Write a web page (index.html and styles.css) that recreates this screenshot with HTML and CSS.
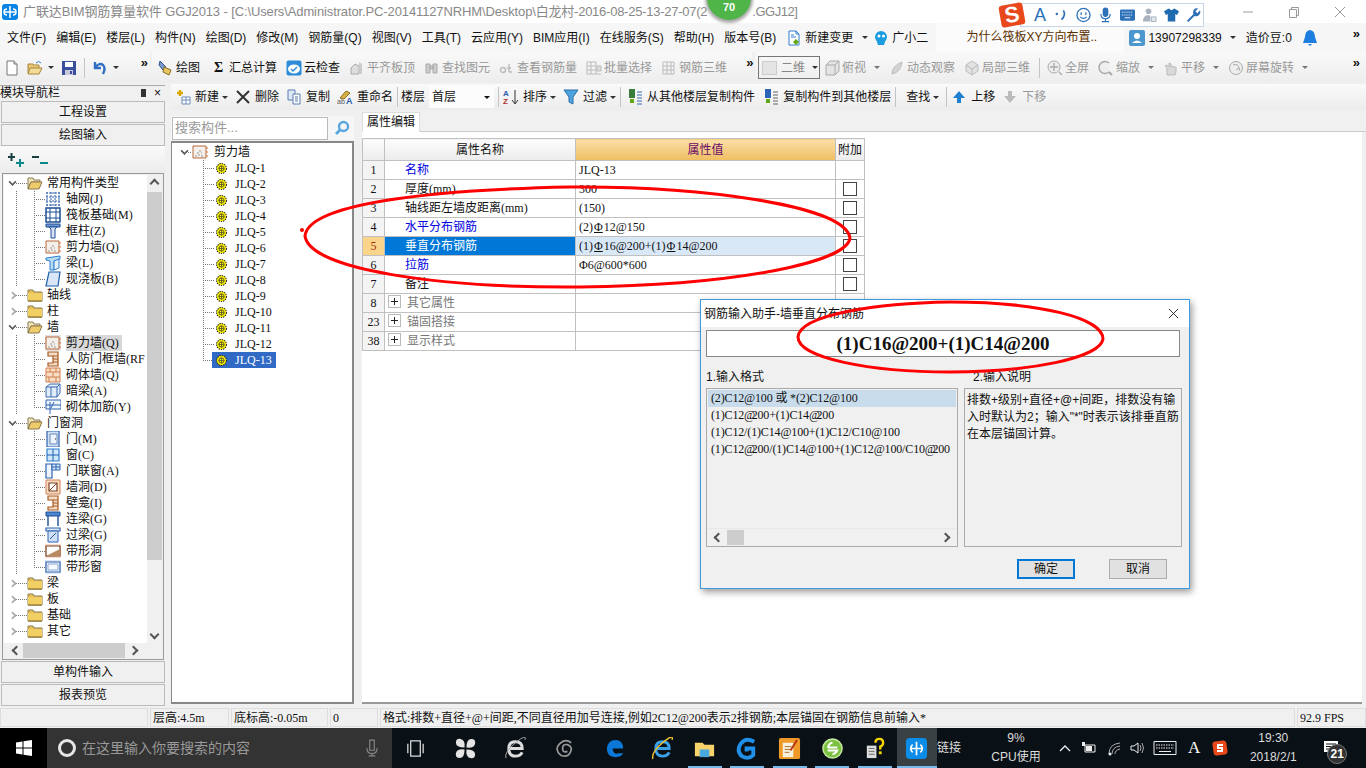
FILE: index.html
```html
<!DOCTYPE html>
<html lang="zh-CN">
<head>
    <meta charset="UTF-8">
    <title>广联达BIM钢筋算量软件 GGJ2013</title>
    <link rel="stylesheet" href="styles.css">
</head>
<body>
    <!-- 图标 -->
    <svg class="defs" width="0" height="0">
        <symbol id="i-new" viewBox="0 0 16 16"><path d="M3 1h7l3 3v11H3z" fill="#fff" stroke="#777"/><path d="M10 1v3h3" fill="#ddd" stroke="#777"/></symbol>
        <symbol id="i-open" viewBox="0 0 16 16"><path d="M1 4h5l1 1h5v8H1z" fill="#e8c878" stroke="#a8853a"/><path d="M3 8h12l-3 6H1z" fill="#f3dc98" stroke="#a8853a"/><path d="M9 3q3-3 5 0" fill="none" stroke="#3a7bc8"/></symbol>
        <symbol id="i-save" viewBox="0 0 16 16"><path d="M1 1h14v14H1z" fill="#3b4fa0"/><path d="M4 2h8v5H4z" fill="#fff"/><path d="M4 10h8v5H4z" fill="#c8c8d8"/><path d="M9 11h2v3H9z" fill="#3b4fa0"/></symbol>
        <symbol id="i-undo" viewBox="0 0 16 16"><path d="M3 2v6h6M3 8q4-6 8-3 3 3 0 9" fill="none" stroke="#2f6fc4" stroke-width="2.4"/></symbol>
        <symbol id="i-draw" viewBox="0 0 16 16"><path d="M2 1l6 6-3 3-4-5z" fill="#7b98c8" stroke="#34558f"/><path d="M6 7l7 3-2 5-6-3z" fill="#e5c560" stroke="#8a6f20"/></symbol>
        <symbol id="i-cloud" viewBox="0 0 16 16"><rect x=".5" y=".5" width="15" height="15" rx="2" fill="#2e8bd8"/><ellipse cx="8" cy="9" rx="6" ry="4.5" fill="#fff"/><path d="M5 9l2 2 4-4" fill="none" stroke="#2e8bd8" stroke-width="1.5"/></symbol>
        <symbol id="i-gplate" viewBox="0 0 16 16"><path d="M2 14V8l4-4 4 2v8z" fill="#ddd" stroke="#aaa"/><path d="M10 2l3 2v10h-3z" fill="#ccc"/></symbol>
        <symbol id="i-gfind" viewBox="0 0 16 16"><path d="M2 4h4v9H2zM9 4h4v9H9zM6 6h3v3H6z" fill="#ccc" stroke="#aaa"/></symbol>
        <symbol id="i-grebar" viewBox="0 0 16 16"><circle cx="4" cy="10" r="2.5" fill="none" stroke="#bbb" stroke-width="1.4"/><path d="M10 4v8M10 12h3M8 8h4" fill="none" stroke="#bbb" stroke-width="1.4"/></symbol>
        <symbol id="i-gbatch" viewBox="0 0 16 16"><path d="M1 2h9M1 6h9M1 10h9M1 14h14M1 2v12M5 2v12M10 2v12" stroke="#bbb" fill="none"/><path d="M11 6h4v5h-4z" fill="#ddd" stroke="#bbb"/></symbol>
        <symbol id="i-g3d" viewBox="0 0 16 16"><path d="M2 2h11v12H2zM2 6h11M2 10h11M6 2v12M10 2v12" fill="none" stroke="#bbb"/></symbol>
        <symbol id="i-gbox" viewBox="0 0 16 16"><path d="M2 5l4-4h9v10l-4 4H2z" fill="#e4e4e4" stroke="#aaa"/><path d="M2 5h9v10M11 5l4-4" fill="none" stroke="#aaa"/></symbol>
        <symbol id="i-gorbit" viewBox="0 0 16 16"><path d="M3 14Q3 6 13 2 12 12 3 14z" fill="#d4d4d4" stroke="#bbb"/></symbol>
        <symbol id="i-glocal" viewBox="0 0 16 16"><path d="M8 1l6 4v6l-6 4-6-4V5z" fill="#e2e2e2" stroke="#bbb"/><path d="M2 5l6 4 6-4M8 9v6" fill="none" stroke="#bbb"/></symbol>
        <symbol id="i-gfull" viewBox="0 0 16 16"><circle cx="7" cy="7" r="6" fill="#eee" stroke="#aaa"/><path d="M7 3v8M3 7h8M12 12l3 3" stroke="#aaa" fill="none" stroke-width="1.3"/></symbol>
        <symbol id="i-gzoom" viewBox="0 0 16 16"><path d="M11 3a6 6 0 1 0 0 9" fill="#eee" stroke="#aaa" stroke-width="1.5"/><path d="M11 12l3 3" stroke="#aaa" stroke-width="2"/></symbol>
        <symbol id="i-gpan" viewBox="0 0 16 16"><path d="M4 15V8l-2-2 2-1 2 2V3l2 1v3l2-1 1 1 2 0v5l-1 3z" fill="#d8d8d8" stroke="#bbb"/></symbol>
        <symbol id="i-grot" viewBox="0 0 16 16"><circle cx="8" cy="8" r="6.5" fill="#eee" stroke="#aaa"/><path d="M5 5q5-2 6 3M8 10l3-2 1 3" fill="none" stroke="#aaa"/></symbol>
        <symbol id="i-nfile" viewBox="0 0 16 16"><path d="M3 1h7l3 3v11H3z" fill="#fff" stroke="#2f7fcf"/><path d="M10 1v3h3M5 5h3M5 7h5" fill="none" stroke="#2f7fcf"/><path d="M10 9l3 3-3 3-3-3z" fill="#63a814"/></symbol>
        <symbol id="i-bot" viewBox="0 0 16 16"><circle cx="8" cy="7" r="6" fill="#1b9be0"/><circle cx="6" cy="6" r="1.5" fill="#fff"/><circle cx="10.500" cy="6" r="1.5" fill="#fff"/><path d="M4 12l1 3h6l1-3" fill="#1b9be0"/></symbol>
        <symbol id="i-user" viewBox="0 0 16 16"><rect width="16" height="16" rx="2" fill="#4d97cf"/><circle cx="8" cy="6" r="3" fill="#fff"/><path d="M3 13q5-5 10 0z" fill="#fff"/></symbol>
        <symbol id="i-bell" viewBox="0 0 16 16"><path d="M8 0q5 1 5 7l2 6H1l2-6q0-6 5-7z" fill="#1d7ee0"/><path d="M6 14h4l-2 2z" fill="#1d7ee0"/></symbol>
        <symbol id="i-add" viewBox="0 0 16 16"><path d="M2 4h6M5 1v6" stroke="#d8a800" stroke-width="2.4"/><path d="M7 8h8v7H7z" fill="#fff" stroke="#6d8bb8"/><path d="M7 11h8M11 8v7" stroke="#6d8bb8"/></symbol>
        <symbol id="i-copy" viewBox="0 0 16 16"><path d="M2 1h7v10H2z" fill="#dfe8f6" stroke="#5a7eb0"/><path d="M7 5h7v10H7z" fill="#fff" stroke="#5a7eb0"/><path d="M9 8h3M9 10h3M9 12h3" stroke="#5a7eb0"/></symbol>
        <symbol id="i-filter" viewBox="0 0 16 16"><path d="M1 1h14l-5 7v7l-4-2V8z" fill="#4da3e0" stroke="#2c6fa8"/></symbol>
        <symbol id="i-cfrom" viewBox="0 0 16 16"><path d="M2 0h6v9H2z" fill="#3a7d3a"/><path d="M3 10h4v4H3z" fill="#63a814"/><path d="M10 3h5M10 6h5M10 9h5M10 12h5M10 15h5" stroke="#3b6bb0"/></symbol>
        <symbol id="i-cto" viewBox="0 0 16 16"><path d="M2 0h6v9H2z" fill="#2f63b8"/><path d="M3 10h4v4H3z" fill="#63a814"/><path d="M10 3h5M10 6h5M10 9h5M10 12h5M10 15h5" stroke="#666"/></symbol>
        <symbol id="i-up" viewBox="0 0 16 16"><path d="M8 2l6 7h-4v5H6V9H2z" fill="#1f7fd0"/></symbol>
        <symbol id="i-down" viewBox="0 0 16 16"><path d="M8 14l6-7h-4V2H6v5H2z" fill="#bbb"/></symbol>
        <symbol id="i-search" viewBox="0 0 16 16"><circle cx="9.500" cy="6.500" r="4.500" fill="none" stroke="#5aa7e0" stroke-width="2.400"/><path d="M6 10l-4 4" stroke="#5aa7e0" stroke-width="2.800"/></symbol>
        <symbol id="i-fclosed" viewBox="0 0 16 16"><path d="M1 3h5l1 2h8v9H1z" fill="#e7c05a" stroke="#8b7b50"/><path d="M1 6h14v8H1z" fill="#f2cf62"/><path d="M1 14h14" stroke="#7a6020"/></symbol>
        <symbol id="i-fopen" viewBox="0 0 16 16"><path d="M1 3h5l1 2h6v2H4l-3 7z" fill="#f1e3b8" stroke="#8b7b50"/><path d="M4 7h11l-3 7H1z" fill="#f0cb6c" stroke="#8b7b50"/></symbol>
        <symbol id="i-grid" viewBox="0 0 16 16"><path d="M1 2h14M1 6h14M1 10h14M1 14h14M2 1v14M6 1v14M10 1v14M14 1v14" stroke="#2f63b0" stroke-dasharray="2 1" fill="none"/></symbol>
        <symbol id="i-raft" viewBox="0 0 16 16"><path d="M1 1h14v14H1z" fill="#fff" stroke="#1c4f96" stroke-width="1.500"/><path d="M1 5h14M1 11h14M5 1v14M11 1v14" stroke="#1c4f96"/></symbol>
        <symbol id="i-col" viewBox="0 0 16 16"><path d="M1 1h14v3H1z" fill="#6f96d0" stroke="#1c4f96"/><path d="M4 4h8l-2 2v9H6V6z" fill="#d8e4f6" stroke="#1c4f96"/></symbol>
        <symbol id="i-wall" viewBox="0 0 16 16"><path d="M1 2h13v12H1z" fill="#f4efe8" stroke="#b8663a"/><path d="M3 12h2M6 11h2M9 12h2M5 9h2M9 9h1M7 7h2" stroke="#999"/><path d="M15 3v2M15 7v2M15 11v2" stroke="#d07030"/></symbol>
        <symbol id="i-beam" viewBox="0 0 16 16"><path d="M1 3l14-2v3L9 6v9H5V6L1 5z" fill="#b8dcf2" stroke="#2f7fcf"/><path d="M9 6l5-2v9l-5 2z" fill="#e4f2fa" stroke="#2f7fcf"/></symbol>
        <symbol id="i-slab" viewBox="0 0 16 16"><path d="M4 1h11l-2 14H1z" fill="#d8e6f8" stroke="#1c5fb0" stroke-width="1.200"/></symbol>
        <symbol id="i-rfwall" viewBox="0 0 16 16"><path d="M3 1h10v14H3v-3h5V5H3z" fill="#f2dcc8" stroke="#a85a20" stroke-width="1.200"/><path d="M8 5h5M8 8h5M8 11h5" stroke="#a85a20"/></symbol>
        <symbol id="i-brick" viewBox="0 0 16 16"><path d="M1 1h14v14H1z" fill="#f8dcc4" stroke="#d08050"/><path d="M1 5h14M1 10h14M5 1v4M11 1v4M8 5v5M4 10v5M11 10v5" stroke="#d08050"/></symbol>
        <symbol id="i-dbeam" viewBox="0 0 16 16"><path d="M1 4l4-3h10v9l-3 4H1z" fill="#e0ecf8" stroke="#3b6bb0"/><path d="M1 4h11v10M12 4l3-3M6 4v10" fill="none" stroke="#3b6bb0"/></symbol>
        <symbol id="i-rebar" viewBox="0 0 16 16"><path d="M1 1h15v9H1z" fill="#eef4fb" stroke="#2f63b0"/><path d="M5 3v12M1 6h15M9 3l-3 6" stroke="#2f63b0" fill="none"/></symbol>
        <symbol id="i-door" viewBox="0 0 16 16"><path d="M2 0h12v16H2z" fill="#cfe0f6" stroke="#2f63b0" stroke-width="1.200"/><path d="M5 3h7v10H5z" fill="#eef4fb" stroke="#6d8bb8"/><path d="M10 8h1" stroke="#222"/></symbol>
        <symbol id="i-win" viewBox="0 0 16 16"><path d="M2 2h12v12H2z" fill="#cfe6fb" stroke="#2f7fcf" stroke-width="1.200"/><path d="M2 8h12M8 2v12" stroke="#1c5fb0"/></symbol>
        <symbol id="i-dwin" viewBox="0 0 16 16"><path d="M1 1h6v14H1z" fill="#eef4fb" stroke="#2f63b0" stroke-width="1.200"/><path d="M7 1h8v6H7z" fill="#cfe6fb" stroke="#2f63b0"/><path d="M11 1v6M7 4h8" stroke="#2f63b0"/></symbol>
        <symbol id="i-hole" viewBox="0 0 16 16"><path d="M1 1h14v14H1z" fill="#f8dcc4" stroke="#d08050"/><path d="M4 4h8v8H4z" fill="#fff" stroke="#7a4020" stroke-width="1.200"/><path d="M4 12l8-8" stroke="#7a4020"/></symbol>
        <symbol id="i-lbeam" viewBox="0 0 16 16"><path d="M1 1h14v4H1z" fill="#4d86d0" stroke="#1c4f96"/><path d="M3 5v10M13 5v10" stroke="#1c4f96" stroke-width="1.400"/></symbol>
        <symbol id="i-lintel" viewBox="0 0 16 16"><path d="M1 1h14v3H1z" fill="#dfe8f6" stroke="#2f63b0" stroke-width="1.200"/><path d="M3 4h10v11H3z" fill="#cfe0f6" stroke="#2f63b0"/><path d="M5 12l6-6" stroke="#2f63b0"/></symbol>
        <symbol id="i-shole" viewBox="0 0 16 16"><path d="M0 1h16v14H0z" fill="#f6ddcf"/><path d="M1 3h14v10H1z" fill="#fff" stroke="#7a4020" stroke-width="1.200"/><path d="M1 13l14-7v7z" fill="#b88a60"/></symbol>
        <symbol id="i-swin" viewBox="0 0 16 16"><path d="M0 1h16v14H0z" fill="#dfe8f6"/><path d="M1 3h14v10H1z" fill="#f6f9fd" stroke="#2f63b0" stroke-width="1.200"/><path d="M3 5h10v6H3z" fill="none" stroke="#8aa8d4"/></symbol>
        <symbol id="i-gear" viewBox="0 0 12 12"><circle cx="6" cy="6" r="5.400" fill="#f6ee00" stroke="#222" stroke-width="1.100" stroke-dasharray="1.500 1"/><circle cx="6" cy="6" r="2.800" fill="#f6ee00" stroke="#333" stroke-width=".8"/><path d="M6 3v6M3 6h6" stroke="#333" stroke-width=".7"/></symbol>
    </svg>

    <div class="page">
        <header class="titlebar">
            <svg class="app-logo" viewBox="0 0 16 16"><rect width="16" height="16" rx="3" fill="#0a84e6"/><path d="M8 2v12M3 8h10M5 5a3 3 0 0 0 0 6M11 5a3 3 0 0 1 0 6" fill="none" stroke="#fff" stroke-width="1.500"/></svg>
            <span class="title-head">广联达BIM钢筋算量软件 GGJ2013 - [C:\Users\Administrator.PC-20141127NRHM\Desktop\</span><span class="title-mid">白龙村-2016-08-25-13-27-07(2</span><span class="title-end">.GGJ12]</span>
            <div class="win-controls">
                <svg viewBox="0 0 12 12"><path d="M1 6h10" stroke="#999"/></svg>
                <svg viewBox="0 0 12 12"><path d="M1.500 3.500h7v8h-7zM3.500 3.500v-2h7v8h-2" fill="none" stroke="#999"/></svg>
                <svg viewBox="0 0 12 12"><path d="M1 1l10 10M11 1L1 11" stroke="#999"/></svg>
            </div>
        </header>

        <nav class="menubar">
            <span>文件(F)</span><span>编辑(E)</span><span>楼层(L)</span><span>构件(N)</span><span>绘图(D)</span><span>修改(M)</span><span>钢筋量(Q)</span><span>视图(V)</span><span>工具(T)</span><span>云应用(Y)</span><span>BIM应用(I)</span><span>在线服务(S)</span><span>帮助(H)</span><span>版本号(B)</span>
            <span class="menu-item"><svg class="ic"><use href="#i-nfile"/></svg>新建变更<i class="caret"></i></span>
            <span class="menu-item menu-bot"><svg class="ic"><use href="#i-bot"/></svg>广小二</span>
            <span class="ask">为什么筏板XY方向布置..</span>
            <span class="menu-item menu-user"><svg class="ic"><use href="#i-user"/></svg>13907298339<i class="caret"></i></span>
            <span>造价豆:0</span>
            <svg class="ic"><use href="#i-bell"/></svg>
            <b class="more more-end">»</b>
        </nav>

        <div class="toolbar tb-main">
            <div class="tb-group tb-file">
                <svg class="ic"><use href="#i-new"/></svg>
                <svg class="ic"><use href="#i-open"/></svg><i class="caret"></i>
                <svg class="ic"><use href="#i-save"/></svg>
                <i class="sep"></i>
                <svg class="ic"><use href="#i-undo"/></svg><i class="caret"></i>
                <b class="more">»</b>
            </div>
            <div class="tb-group tb-draw">
                <span class="tool"><svg class="ic"><use href="#i-draw"/></svg>绘图</span>
                <span class="tool"><b class="sigma">Σ</b>汇总计算</span>
                <span class="tool"><svg class="ic"><use href="#i-cloud"/></svg>云检查</span>
                <span class="tool off"><svg class="ic"><use href="#i-gplate"/></svg>平齐板顶</span>
                <span class="tool off"><svg class="ic"><use href="#i-gfind"/></svg>查找图元</span>
                <span class="tool off"><svg class="ic"><use href="#i-grebar"/></svg>查看钢筋量</span>
                <span class="tool off"><svg class="ic"><use href="#i-gbatch"/></svg>批量选择</span>
                <span class="tool off"><svg class="ic"><use href="#i-g3d"/></svg>钢筋三维</span>
                <b class="more">»</b>
            </div>
            <div class="tb-group tb-view">
                <span class="view-combo"><i class="swatch"></i>二维<i class="caret"></i></span>
                <span class="tool off"><svg class="ic"><use href="#i-gbox"/></svg>俯视<i class="caret"></i></span>
                <span class="tool off"><svg class="ic"><use href="#i-gorbit"/></svg>动态观察</span>
                <span class="tool off"><svg class="ic"><use href="#i-glocal"/></svg>局部三维</span>
                <i class="sep"></i>
                <span class="tool off"><svg class="ic"><use href="#i-gfull"/></svg>全屏</span>
                <span class="tool off"><svg class="ic"><use href="#i-gzoom"/></svg>缩放<i class="caret"></i></span>
                <span class="tool off"><svg class="ic"><use href="#i-gpan"/></svg>平移<i class="caret"></i></span>
                <span class="tool off"><svg class="ic"><use href="#i-grot"/></svg>屏幕旋转<i class="caret"></i></span>
                <b class="more more-end">»</b>
            </div>
        </div>

        <div class="workspace">
            <aside class="nav">
                <div class="nav-head"><span>模块导航栏</span><span class="nav-pins"><i class="pin"></i>×</span></div>
                <div class="nav-btn">工程设置</div>
                <div class="nav-btn">绘图输入</div>
                <div class="nav-tools">
                    <svg viewBox="0 0 18 16"><path d="M1 5h7M4.500 1v8" stroke="#174040" stroke-width="2"/><path d="M9 11h8M13 7v8" stroke="#0a8a8a" stroke-width="2"/></svg>
                    <svg viewBox="0 0 18 16"><path d="M1 5h7" stroke="#174040" stroke-width="2"/><path d="M9 11h8" stroke="#0a8a8a" stroke-width="2"/></svg>
                </div>
                <div class="nav-tree">
                    <div class="tree-view">
                        <div class="node"><i class="chev open"></i><i class="stub"></i><svg class="ic"><use href="#i-fopen"/></svg><span>常用构件类型</span></div>
                        <div class="kids">
                            <div class="leaf"><i class="dots"></i><svg class="ic"><use href="#i-grid"/></svg><span>轴网(J)</span></div>
                            <div class="leaf"><i class="dots"></i><svg class="ic"><use href="#i-raft"/></svg><span>筏板基础(M)</span></div>
                            <div class="leaf"><i class="dots"></i><svg class="ic"><use href="#i-col"/></svg><span>框柱(Z)</span></div>
                            <div class="leaf"><i class="dots"></i><svg class="ic"><use href="#i-wall"/></svg><span>剪力墙(Q)</span></div>
                            <div class="leaf"><i class="dots"></i><svg class="ic"><use href="#i-beam"/></svg><span>梁(L)</span></div>
                            <div class="leaf"><i class="dots"></i><svg class="ic"><use href="#i-slab"/></svg><span>现浇板(B)</span></div>
                        </div>
                        <div class="node"><i class="chev"></i><i class="stub"></i><svg class="ic"><use href="#i-fclosed"/></svg><span>轴线</span></div>
                        <div class="node"><i class="chev"></i><i class="stub"></i><svg class="ic"><use href="#i-fclosed"/></svg><span>柱</span></div>
                        <div class="node"><i class="chev open"></i><i class="stub"></i><svg class="ic"><use href="#i-fopen"/></svg><span>墙</span></div>
                        <div class="kids">
                            <div class="leaf active"><i class="dots"></i><svg class="ic"><use href="#i-wall"/></svg><span>剪力墙(Q)</span></div>
                            <div class="leaf"><i class="dots"></i><svg class="ic"><use href="#i-rfwall"/></svg><span>人防门框墙(RF</span></div>
                            <div class="leaf"><i class="dots"></i><svg class="ic"><use href="#i-brick"/></svg><span>砌体墙(Q)</span></div>
                            <div class="leaf"><i class="dots"></i><svg class="ic"><use href="#i-dbeam"/></svg><span>暗梁(A)</span></div>
                            <div class="leaf"><i class="dots"></i><svg class="ic"><use href="#i-rebar"/></svg><span>砌体加筋(Y)</span></div>
                        </div>
                        <div class="node"><i class="chev open"></i><i class="stub"></i><svg class="ic"><use href="#i-fopen"/></svg><span>门窗洞</span></div>
                        <div class="kids">
                            <div class="leaf"><i class="dots"></i><svg class="ic"><use href="#i-door"/></svg><span>门(M)</span></div>
                            <div class="leaf"><i class="dots"></i><svg class="ic"><use href="#i-win"/></svg><span>窗(C)</span></div>
                            <div class="leaf"><i class="dots"></i><svg class="ic"><use href="#i-dwin"/></svg><span>门联窗(A)</span></div>
                            <div class="leaf"><i class="dots"></i><svg class="ic"><use href="#i-hole"/></svg><span>墙洞(D)</span></div>
                            <div class="leaf"><i class="dots"></i><svg class="ic"><use href="#i-rfwall"/></svg><span>壁龛(I)</span></div>
                            <div class="leaf"><i class="dots"></i><svg class="ic"><use href="#i-lbeam"/></svg><span>连梁(G)</span></div>
                            <div class="leaf"><i class="dots"></i><svg class="ic"><use href="#i-lintel"/></svg><span>过梁(G)</span></div>
                            <div class="leaf"><i class="dots"></i><svg class="ic"><use href="#i-shole"/></svg><span>带形洞</span></div>
                            <div class="leaf"><i class="dots"></i><svg class="ic"><use href="#i-swin"/></svg><span>带形窗</span></div>
                        </div>
                        <div class="node"><i class="chev"></i><i class="stub"></i><svg class="ic"><use href="#i-fclosed"/></svg><span>梁</span></div>
                        <div class="node"><i class="chev"></i><i class="stub"></i><svg class="ic"><use href="#i-fclosed"/></svg><span>板</span></div>
                        <div class="node"><i class="chev"></i><i class="stub"></i><svg class="ic"><use href="#i-fclosed"/></svg><span>基础</span></div>
                        <div class="node"><i class="chev"></i><i class="stub"></i><svg class="ic"><use href="#i-fclosed"/></svg><span>其它</span></div>
                    </div>
                    <div class="vscroll"><i class="arrow up"></i><i class="thumb"></i><i class="arrow down"></i></div>
                    <div class="hscroll"><i class="arrow left"></i><i class="thumb"></i><i class="arrow right"></i></div>
                </div>
                <div class="nav-btn">单构件输入</div>
                <div class="nav-btn">报表预览</div>
            </aside>

            <main class="editor">
                <div class="toolbar tb-comp">
                    <span class="tool"><svg class="ic"><use href="#i-add"/></svg>新建<i class="caret"></i></span>
                    <span class="tool"><svg class="ic" viewBox="0 0 16 16"><path d="M2 2l12 12M14 2L2 14" stroke="#333" stroke-width="2"/></svg>删除</span>
                    <span class="tool"><svg class="ic"><use href="#i-copy"/></svg>复制</span>
                    <span class="tool"><svg class="ic" viewBox="0 0 16 16"><path d="M3 9l6-7 4 2-6 6z" fill="#d8b048" stroke="#8a6f20"/><text x="0" y="15" font-size="7" fill="#555" font-family="Liberation Sans">ab</text><text x="9" y="15" font-size="9" font-weight="700" fill="#2d5fb0" font-family="Liberation Sans">A</text></svg>重命名</span>
                    <i class="sep"></i>
                    <span class="floor-label">楼层</span>
                    <span class="floor-combo">首层<i class="caret"></i></span>
                    <i class="sep"></i>
                    <span class="tool"><svg class="ic" viewBox="0 0 16 16"><text x="0" y="7" font-size="8" font-weight="700" fill="#2d5fb0" font-family="Liberation Sans">A</text><text x="0" y="15" font-size="8" font-weight="700" fill="#b03030" font-family="Liberation Sans">Z</text><path d="M12 1v13M9 11l3 4 3-4" fill="none" stroke="#333"/></svg>排序<i class="caret"></i></span>
                    <span class="tool"><svg class="ic"><use href="#i-filter"/></svg>过滤<i class="caret"></i></span>
                    <i class="sep"></i>
                    <span class="tool tool-from"><svg class="ic"><use href="#i-cfrom"/></svg>从其他楼层复制构件</span>
                    <span class="tool tool-to"><svg class="ic"><use href="#i-cto"/></svg>复制构件到其他楼层</span>
                    <i class="sep"></i>
                    <span class="tool tool-find">查找<i class="caret"></i></span>
                    <i class="sep sep-wide"></i>
                    <span class="tool"><svg class="ic"><use href="#i-up"/></svg>上移</span>
                    <span class="tool off"><svg class="ic"><use href="#i-down"/></svg>下移</span>
                </div>

                <div class="editor-body">
                    <section class="comp-panel">
                        <div class="search-row">
                            <span class="search-input">搜索构件...</span>
                            <svg class="search-ic"><use href="#i-search"/></svg>
                        </div>
                        <div class="comp-tree">
                            <div class="node"><i class="chev open"></i><i class="stub"></i><svg class="ic"><use href="#i-wall"/></svg><span>剪力墙</span></div>
                            <div class="kids kids-plain">
                                <div class="leaf"><i class="dots"></i><svg class="gear"><use href="#i-gear"/></svg><span>JLQ-1</span></div>
                                <div class="leaf"><i class="dots"></i><svg class="gear"><use href="#i-gear"/></svg><span>JLQ-2</span></div>
                                <div class="leaf"><i class="dots"></i><svg class="gear"><use href="#i-gear"/></svg><span>JLQ-3</span></div>
                                <div class="leaf"><i class="dots"></i><svg class="gear"><use href="#i-gear"/></svg><span>JLQ-4</span></div>
                                <div class="leaf"><i class="dots"></i><svg class="gear"><use href="#i-gear"/></svg><span>JLQ-5</span></div>
                                <div class="leaf"><i class="dots"></i><svg class="gear"><use href="#i-gear"/></svg><span>JLQ-6</span></div>
                                <div class="leaf"><i class="dots"></i><svg class="gear"><use href="#i-gear"/></svg><span>JLQ-7</span></div>
                                <div class="leaf"><i class="dots"></i><svg class="gear"><use href="#i-gear"/></svg><span>JLQ-8</span></div>
                                <div class="leaf"><i class="dots"></i><svg class="gear"><use href="#i-gear"/></svg><span>JLQ-9</span></div>
                                <div class="leaf"><i class="dots"></i><svg class="gear"><use href="#i-gear"/></svg><span>JLQ-10</span></div>
                                <div class="leaf"><i class="dots"></i><svg class="gear"><use href="#i-gear"/></svg><span>JLQ-11</span></div>
                                <div class="leaf"><i class="dots"></i><svg class="gear"><use href="#i-gear"/></svg><span>JLQ-12</span></div>
                                <div class="leaf picked"><i class="dots"></i><span class="pick"><svg class="gear"><use href="#i-gear"/></svg><span>JLQ-13</span></span></div>
                            </div>
                        </div>
                    </section>

                    <section class="props">
                        <div class="tabs"><span class="tab">属性编辑</span></div>
                        <div class="props-body">
                            <table class="prop-table">
                                <colgroup><col class="c-no"><col class="c-name"><col class="c-val"><col class="c-add"></colgroup>
                                <thead><tr><th></th><th>属性名称</th><th class="th-val">属性值</th><th>附加</th></tr></thead>
                                <tbody>
                                    <tr><td class="no">1</td><td class="name link">名称</td><td class="val">JLQ-13</td><td></td></tr>
                                    <tr><td class="no">2</td><td class="name">厚度(mm)</td><td class="val">300</td><td class="chk"><i></i></td></tr>
                                    <tr><td class="no">3</td><td class="name">轴线距左墙皮距离(mm)</td><td class="val">(150)</td><td class="chk"><i></i></td></tr>
                                    <tr><td class="no">4</td><td class="name link">水平分布钢筋</td><td class="val">(2)<span class="rebar">Φ</span>12@150</td><td class="chk"><i></i></td></tr>
                                    <tr class="sel"><td class="no">5</td><td class="name">垂直分布钢筋</td><td class="val">(1)<span class="rebar">Φ</span>16@200+(1)<span class="rebar">Φ</span>14@200</td><td class="chk"><i></i></td></tr>
                                    <tr><td class="no">6</td><td class="name link">拉筋</td><td class="val">Φ6@600*600</td><td class="chk"><i></i></td></tr>
                                    <tr><td class="no">7</td><td class="name">备注</td><td class="val"></td><td class="chk"><i></i></td></tr>
                                    <tr class="grp"><td class="no">8</td><td class="name"><i class="plus"></i>其它属性</td><td></td><td></td></tr>
                                    <tr class="grp"><td class="no">23</td><td class="name"><i class="plus"></i>锚固搭接</td><td></td><td></td></tr>
                                    <tr class="grp"><td class="no">38</td><td class="name"><i class="plus"></i>显示样式</td><td></td><td></td></tr>
                                </tbody>
                            </table>
                        </div>
                    </section>
                </div>
            </main>
        </div>

        <footer class="statusbar">
            <span class="st-a"></span>
            <span class="st-b">层高:4.5m</span>
            <span class="st-c">底标高:-0.05m</span>
            <span class="st-d">0</span>
            <span class="st-e">格式:排数+直径+@+间距,不同直径用加号连接,例如2C12@200表示2排钢筋;本层锚固在钢筋信息前输入*</span>
            <span class="st-f">92.9 FPS</span>
        </footer>

        <div class="taskbar">
            <span class="start"><svg viewBox="0 0 16 16"><path d="M0 2.500l6.500-1v6H0zM7.500 1.300L16 0v7.500H7.500zM0 8.500h6.500v6l-6.500-1zM7.500 8.500H16V16l-8.500-1.300z" fill="#fff"/></svg></span>
            <span class="task-search">
                <i class="cortana"></i>
                <span>在这里输入你要搜索的内容</span>
                <svg viewBox="0 0 16 16"><path d="M6 1h4v9H6zM3.500 8q0 5 4.500 5t4.500-5M8 13v2M5 15h6" fill="none" stroke="#888"/></svg>
            </span>
            <div class="task-apps">
                <div class="apps-pinned">
                    <svg viewBox="0 0 24 24"><path d="M7 4h10v16H7zM4 7v10M20 7v10" fill="none" stroke="#ddd" stroke-width="1.300"/></svg>
                    <svg viewBox="0 0 24 24"><path d="M11 11Q2 11 2 6t5-4 4 9zM13 11q0-9 5-9t4 5-9 4zM13 13q9 0 9 5t-5 4-4-9zM11 13q0 9-5 9t-4-5 9-4z" fill="#e4e4e4"/></svg>
                    <svg viewBox="0 0 24 24"><path d="M5 12h14q0-7-7-7T5 12q0 8 7 8 5 0 7-4" fill="none" stroke="#ddd" stroke-width="3"/><path d="M2 22Q0 16 12 6t10-3" fill="none" stroke="#aaa"/></svg>
                    <svg viewBox="0 0 24 24"><path d="M18 6Q12 1 6 7t1 12q7 3 10-3t-3-8q-5-1-5 4t5 3" fill="none" stroke="#999" stroke-width="1.800"/></svg>
                    <svg viewBox="0 0 24 24"><path d="M4 12h16q0-9-8-9T3 12q0 9 9 9 6 0 8-4h-5q-5 2-6-5z" fill="#0b78d7"/></svg>
                </div>
                <div class="apps-running">
                    <span class="app"><svg viewBox="0 0 24 24"><path d="M5 12h14q0-7-7-7T5 12q0 8 7 8 5 0 7-4" fill="none" stroke="#3aa1e8" stroke-width="3"/><path d="M2 23Q0 16 12 6t10-3" fill="none" stroke="#f2c230" stroke-width="1.500"/></svg></span>
                    <span class="app app-on"><svg viewBox="0 0 24 24"><path d="M2 6h8l2 2h10v12H2z" fill="#f6d469"/><path d="M7 13h10v8H7z" fill="#4aa9e0"/></svg></span>
                    <span class="app app-on"><svg viewBox="0 0 24 24"><path d="M19 5Q10 0 5 7t1 13q7 4 12-1v-7h-7v3" fill="none" stroke="#1f8fe8" stroke-width="4"/></svg></span>
                    <span class="app app-on"><svg viewBox="0 0 24 24"><rect x="1" y="1" width="22" height="22" rx="2" fill="#ef9a28"/><path d="M5 6h11v15H5z" fill="#f7f0dc"/><path d="M7 10h7M7 13h7M7 16h5" stroke="#b07030"/><path d="M20 3l-7 11" stroke="#b83a10" stroke-width="2"/></svg></span>
                    <span class="app app-on"><svg viewBox="0 0 24 24"><circle cx="12" cy="12" r="10" fill="#7cc242" stroke="#c8eaa0" stroke-width="1.500"/><path d="M7 11h10M7 14h10q-2 4-5 4M7 11q2-5 5-5" fill="none" stroke="#fff" stroke-width="2"/></svg></span>
                    <span class="app app-on"><svg viewBox="0 0 24 24"><path d="M4 9h10v13H4z" fill="#ddd"/><path d="M6 12h6M6 15h6M6 18h6" stroke="#666"/><path d="M13 6q0-4 4-4t4 4q0 3-3 4v3" fill="none" stroke="#f6d400" stroke-width="2.500"/><path d="M16.500 15h3v3h-3z" fill="#f6d400"/></svg></span>
                    <span class="app app-cur"><svg viewBox="0 0 24 24"><rect x="1" y="1" width="22" height="22" rx="4" fill="#0a8ce8"/><path d="M12 5v14M6 12h12M8 8a5 5 0 0 0 0 8M16 8a5 5 0 0 1 0 8" fill="none" stroke="#fff" stroke-width="1.800"/></svg></span>
                </div>
            </div>
            <span class="task-link">链接</span>
            <span class="cpu">9%<br>CPU使用</span>
            <div class="tray">
                <svg viewBox="0 0 16 16"><path d="M3 11l5-5 5 5" fill="none" stroke="#eee" stroke-width="1.300"/></svg>
                <svg viewBox="0 0 16 16"><path d="M4 5h10v7H4z" fill="none" stroke="#eee"/><path d="M5 6h6v5H5zM1 2h3v4H1z" fill="#eee"/></svg>
                <svg class="tray-wifi" viewBox="0 0 16 16"><path d="M2 14q0-10 11-11M5 14q0-7 8-8M8 14q0-4 5-5" fill="none" stroke="#aaa"/><circle cx="3" cy="14" r="1.500" fill="#eee"/></svg>
                <svg viewBox="0 0 16 16"><path d="M2 6h3l4-3v10L5 10H2z" fill="none" stroke="#eee"/><path d="M11 5q2 3 0 6M13 3q3 5 0 10" fill="none" stroke="#aaa"/></svg>
                <svg class="tray-kb" viewBox="0 0 24 16"><path d="M1 1.500h22v13H1z" fill="none" stroke="#eee"/><path d="M3 5h18M3 8h18" stroke="#eee" stroke-dasharray="1.500 1"/><path d="M6 11.500h12" stroke="#eee"/></svg>
                <span class="tray-a">A</span>
                <svg viewBox="0 0 16 16"><rect x="1" y="1" width="14" height="14" rx="3" fill="#e8481c" transform="rotate(-8 8 8)"/><path d="M11 5H6v3h4v3H5" fill="none" stroke="#fff" stroke-width="2"/></svg>
            </div>
            <span class="clock">19:30<br>2018/2/1</span>
            <span class="notice"><svg viewBox="0 0 16 16"><path d="M1 1h14v11H9l-3 3v-3H1z" fill="#fff"/><path d="M3 4h10M3 6.500h10M3 9h7" stroke="#111"/></svg><b>21</b></span>
        </div>
    </div>

    <!-- 浮在上面的部分 -->
    <div class="badge">70</div>

    <div class="ime">
        <span class="ime-logo">S</span>
        <div class="ime-bar">
            <span class="ime-a">A</span>
            <svg viewBox="0 0 16 16"><circle cx="3" cy="7" r="1.300" fill="#2d71b8"/><path d="M10 3q3 5-2 10" fill="none" stroke="#2d71b8" stroke-width="1.800"/></svg>
            <svg viewBox="0 0 16 16"><circle cx="8" cy="8" r="7" fill="none" stroke="#2d71b8" stroke-width="1.400"/><path d="M5.500 5v3M10.500 5v3M4.500 10q3.500 3 7 0" fill="none" stroke="#2d71b8" stroke-width="1.300"/></svg>
            <svg viewBox="0 0 16 16"><rect x="5" y="0" width="6" height="10" rx="3" fill="#2d71b8"/><path d="M3 7q0 5 5 5t5-5M8 12v3M4 15h8" fill="none" stroke="#2d71b8" stroke-width="1.300"/></svg>
            <svg viewBox="0 0 16 16"><rect y="2" width="16" height="12" rx="1.500" fill="#2d71b8"/><path d="M2 5h12M2 8h12" stroke="#fff" stroke-dasharray="1 1"/><path d="M5 11h6" stroke="#fff"/></svg>
            <svg viewBox="0 0 16 16"><circle cx="7" cy="4" r="3" fill="#aab4bf"/><path d="M1 15q0-7 6-7l2 1v6z" fill="#aab4bf"/><path d="M10 10h5v5h-5z" fill="#dfe6ec" stroke="#aab4bf"/></svg>
            <svg viewBox="0 0 16 16"><path d="M5 1l3 2 3-2 5 3-2 4-2-1v8H4V7L2 8 0 4z" fill="#1f6bb0"/></svg>
            <svg viewBox="0 0 16 16"><path d="M15 3l-3 3-2-2 3-3q-4-1-5 2t0 4L1 14l1.500 1.500L9 9q3 1 5-1t1-5z" fill="#2d71b8"/></svg>
        </div>
    </div>

    <div class="dialog">
        <div class="dlg-title">
            <span>钢筋输入助手-墙垂直分布钢筋</span>
            <svg viewBox="0 0 12 12"><path d="M1 1l10 10M11 1L1 11" stroke="#222"/></svg>
        </div>
        <div class="dlg-body">
            <div class="dlg-input">(1)C16@200+(1)C14@200</div>
            <div class="dlg-columns">
                <div class="dlg-col">
                    <div class="dlg-label">1.输入格式</div>
                    <div class="dlg-list">
                        <div class="dlg-items">
                            <div class="dlg-item on">(2)C12@100 或 *(2)C12@100</div>
                            <div class="dlg-item">(1)C12<span class="at">@</span>200+(1)C14<span class="at">@</span>200</div>
                            <div class="dlg-item">(1)C12/(1)C14@100+(1)C12/C10@100</div>
                            <div class="dlg-item">(1)C12<span class="at">@</span>200/(1)C14@100+(1)C12@100/C10<span class="at">@</span>200</div>
                        </div>
                        <div class="dlg-hscroll"><i class="arrow left"></i><i class="thumb"></i><i class="arrow right"></i></div>
                    </div>
                </div>
                <div class="dlg-col dlg-col-r">
                    <div class="dlg-label">2.输入说明</div>
                    <div class="dlg-desc">排数+级别+直径+@+间距，排数没有输入时默认为2；输入"*"时表示该排垂直筋在本层锚固计算。</div>
                </div>
            </div>
            <div class="dlg-actions">
                <span class="dlg-btn primary">确定</span>
                <span class="dlg-btn">取消</span>
            </div>
        </div>
    </div>

    <!-- 截图上手画的红圈 -->
    <svg class="marks" viewBox="0 0 1366 768">
        <path d="M305 236C308 205 420 190 570 187C700 186 845 205 850 238C847 262 740 285 580 287C440 288 310 270 305 236Z" fill="none" stroke="#f00" stroke-width="3"/>
        <path d="M798 337C800 314 880 303 950 302C1040 302 1103 318 1103 339C1100 358 1030 372 950 372C870 372 798 358 798 337Z" fill="none" stroke="#f00" stroke-width="3"/>
        <circle cx="302" cy="230" r="2" fill="#f00"/>
    </svg>
</body>
</html>
```

FILE: styles.css
```css
html, body {
    margin: 0;
    padding: 0;
    background: #f0f0f0;
    overflow: hidden;
}
body {
    width: 1366px;
    height: 768px;
    position: relative;
    font-family: "Liberation Sans", "Noto Sans CJK SC", sans-serif;
    font-size: 12px;
    line-height: 16px;
    color: #111;
}
i { font-style: normal; }
.defs { position: absolute; }
.page {
    width: 1366px;
    height: 768px;
    display: flex;
    flex-direction: column;
}
.ic {
    width: 16px;
    height: 16px;
    flex: none;
}
.caret {
    display: inline-block;
    width: 0;
    height: 0;
    margin-left: 6px;
    border-left: 3px solid transparent;
    border-right: 3px solid transparent;
    border-top: 3px solid #333;
    flex: none;
}
.sep {
    width: 1px;
    height: 20px;
    background: #c4c4c4;
    flex: none;
}
.more {
    font-size: 13px;
    line-height: 12px;
    align-self: flex-start;
    margin-top: 5px;
    font-weight: 700;
}

/* 标题栏 */
.titlebar {
    height: 23px;
    flex: none;
    display: flex;
    align-items: center;
    padding-left: 2px;
    background: #fff;
    color: #888;
    font-size: 13px;
    white-space: nowrap;
}
.app-logo {
    width: 16px;
    height: 16px;
    margin-right: 5px;
}
.title-head { letter-spacing: -.12px; }
.title-mid { letter-spacing: -.25px; }
/* 中间被绿色圆标盖住 */
.title-end { margin-left: 45px; letter-spacing: -.5px; }
.win-controls {
    margin-left: auto;
    display: flex;
    gap: 34px;
    padding-right: 20px;
}
.win-controls svg { width: 12px; height: 12px; }

/* 菜单 */
.menubar {
    height: 29px;
    flex: none;
    display: flex;
    align-items: center;
    gap: 10px;
    padding-left: 7px;
    background: #f6f6f6;
    white-space: nowrap;
}
.menu-item {
    display: flex;
    align-items: center;
    gap: 3px;
}
.menu-bot { margin-left: -5px; }
.menu-user { margin-left: -5px; }
.menu-user .caret { margin-left: 5px; }
.ask {
    width: 188px;
    height: 29px;
    line-height: 29px;
    padding-left: 30px;
    margin-left: -2px;
    box-sizing: border-box;
    background: #fbfbfb;
    color: #5a3000;
}
.more-end { margin-left: auto; margin-right: 6px; }

/* 工具栏 */
.toolbar {
    display: flex;
    align-items: center;
    background: linear-gradient(#fafafa, #ececec);
}
.tb-main {
    height: 31px;
    flex: none;
    background: #f0f0f0;
}
.tb-group {
    height: 31px;
    display: flex;
    align-items: center;
    background: linear-gradient(#f9f9f9, #ededed);
    border-radius: 3px;
    box-sizing: border-box;
}
.tb-file {
    width: 150px;
    padding-left: 4px;
    gap: 7px;
}
.tb-file .caret { margin-left: -2px; }
.tb-file .more { margin-left: auto; margin-right: 2px; }
.tb-draw {
    width: 600px;
    margin-left: 2px;
    padding-left: 6px;
    gap: 9px;
}
.tb-draw .more { margin-left: 10px; }
.tb-view {
    flex: 1;
    margin-left: 3px;
    padding-left: 3px;
    gap: 9px;
}
.tb-view .sep { margin-right: -2px; }
.tool {
    display: flex;
    align-items: center;
    gap: 2px;
    white-space: nowrap;
}
.off { color: #999; }
.off .caret { border-top-color: #777; }
.sigma {
    font-family: "Liberation Serif", serif;
    font-size: 14px;
    width: 13px;
    margin-left: 5px;
}
.view-combo {
    width: 62px;
    height: 23px;
    display: flex;
    align-items: center;
    box-sizing: border-box;
    border: 1px solid #777;
    padding-left: 3px;
    margin-right: -5px;
    color: #888;
}
.swatch {
    width: 13px;
    height: 12px;
    margin-right: 4px;
    background: #e4e4e4;
    border: 1px solid #ccc;
}
.view-combo .caret { margin-left: 7px; }

/* 主区域 */
.workspace {
    flex: 1;
    min-height: 0;
    display: flex;
}
.nav {
    width: 165px;
    flex: none;
    display: flex;
    flex-direction: column;
    padding: 2px 0 1px;
    box-sizing: border-box;
}
.nav-head {
    height: 15px;
    flex: none;
    display: flex;
    justify-content: space-between;
    line-height: 14px;
    padding-right: 4px;
    box-sizing: border-box;
    border-top: 1px solid #aaa;
}
.nav-pins { display: flex; gap: 8px; align-items: center; }
.pin {
    width: 5px;
    height: 8px;
    background: #333;
}
.nav-btn {
    height: 20px;
    line-height: 20px;
    text-align: center;
    flex: none;
    margin: 1px 0 0 1px;
    background: #f0f0f0;
    border: 1px solid #bbb;
}
.nav-tools {
    height: 27px;
    flex: none;
    display: flex;
    align-items: center;
    gap: 6px;
    padding-left: 7px;
    background: linear-gradient(#fafafa, #ececec);
}
.nav-tools svg { width: 18px; height: 16px; }
.nav-tree {
    flex: 1;
    min-height: 0;
    display: grid;
    grid-template-columns: 1fr 15px;
    grid-template-rows: 1fr 15px;
    margin: 0 1px 0 2px;
    padding: 1px;
    border: 1px solid #999;
    background: #f0f0f0;
    font-family: "Liberation Serif", "Noto Sans CJK SC", serif;
}
.tree-view {
    overflow: hidden;
    background: #fff;
}
.node, .leaf {
    height: 16px;
    display: flex;
    align-items: center;
    white-space: nowrap;
}
.chev {
    width: 7px;
    height: 7px;
    margin-left: 5px;
    flex: none;
    box-sizing: border-box;
    border-right: 2px solid #aaa;
    border-top: 2px solid #aaa;
    transform: scale(.8) rotate(45deg);
}
.chev.open {
    border-color: #555;
    transform: scale(.8) translateY(-2px) rotate(135deg);
}
.stub {
    width: 11px;
    height: 1px;
    flex: none;
    background: repeating-linear-gradient(90deg, #777 0 1px, transparent 1px 2px);
}
.node .ic { margin-right: 4px; }
.kids {
    margin-left: 12px;
    padding-left: 18px;
    background: repeating-linear-gradient(#777 0 1px, transparent 1px 2px) 0 0 / 1px 100% no-repeat;
}
.dots {
    width: 11px;
    height: 16px;
    flex: none;
    align-self: flex-start;
    box-sizing: border-box;
    background:
        repeating-linear-gradient(#777 0 1px, transparent 1px 2px) 0 0 / 1px 100% no-repeat,
        repeating-linear-gradient(90deg, #777 0 1px, transparent 1px 2px) 0 8px / 100% 1px no-repeat;
}
.leaf:last-child .dots { height: 9px; }
.leaf .ic { margin-right: 5px; }
.leaf.active span { background: #d8d8d8; padding: 0 3px 0 0; }
.leaf.active .ic { background: #e4e4e4; }
.arrow {
    width: 7px;
    height: 7px;
    box-sizing: border-box;
    border-left: 2px solid #555;
    border-top: 2px solid #555;
    flex: none;
}
.arrow.up { transform: rotate(45deg); }
.arrow.down { transform: rotate(225deg); }
.arrow.left { transform: rotate(-45deg); }
.arrow.right { transform: rotate(135deg); }
.vscroll {
    display: flex;
    flex-direction: column;
    align-items: center;
    background: #f0f0f0;
    padding-top: 5px;
}
.vscroll .thumb {
    width: 15px;
    height: 368px;
    margin-top: 5px;
    background: #cdcdcd;
}
.vscroll .arrow.down { margin-top: auto; margin-bottom: 5px; }
.hscroll {
    grid-column: 1 / 3;
    display: flex;
    align-items: center;
    padding: 0 25px 0 9px;
    background: #f0f0f0;
}
.hscroll .thumb {
    width: 102px;
    height: 15px;
    margin-left: 3px;
    background: #cdcdcd;
}
.hscroll .arrow.right { margin-left: auto; }

/* 右侧 */
.editor {
    flex: 1;
    min-width: 0;
    display: flex;
    flex-direction: column;
    margin-left: 6px;
}
.tb-comp {
    height: 26px;
    flex: none;
    gap: 7px;
    padding-left: 4px;
    margin-top: 1px;
}
.tb-comp .tool { gap: 4px; }
.tb-comp .caret { margin-left: -1px; }
.tb-comp .sep { margin: 0 -3px; }
.tb-comp .sep-wide { margin-left: 0; }
.tb-comp .tool-from { margin-left: 2px; }
.tb-comp .tool-to { margin-left: 1px; }
.tb-comp .tool-find { margin-left: 6px; }
.floor-label { margin-left: -1px; }
.floor-combo {
    width: 65px;
    height: 22px;
    line-height: 22px;
    margin-left: -3px;
    padding-left: 3px;
    box-sizing: border-box;
    background: #fcfcfc;
    display: flex;
    align-items: center;
}
.tb-comp .floor-combo .caret { margin-left: auto; margin-right: 4px; border-top-color: #111; }
.editor-body {
    flex: 1;
    min-height: 0;
    display: flex;
    padding-bottom: 3px;
}
.comp-panel {
    width: 183px;
    flex: none;
    display: flex;
    flex-direction: column;
    padding-top: 6px;
}
.search-row {
    height: 24px;
    flex: none;
    display: flex;
    align-items: center;
    gap: 6px;
    background: #f6f6f6;
}
.search-input {
    width: 156px;
    height: 23px;
    line-height: 19px;
    margin-left: 1px;
    padding-left: 2px;
    box-sizing: border-box;
    border: 1px solid #bbb;
    background: #fff;
    color: #999;
    font-size: 13px;
}
.search-ic { width: 16px; height: 16px; }
.comp-tree {
    flex: 1;
    margin-top: 1px;
    padding-top: 1px;
    background: #fff;
    border: 1px solid #888;
    border-width: 2px 2px 2px 1px;
    font-family: "Liberation Serif", "Noto Sans CJK SC", serif;
}
.comp-tree .chev { margin-left: 9px; }
.comp-tree .stub { width: 4px; }
.comp-tree .node .ic { margin-right: 6px; }
.kids-plain {
    margin-left: 31px;
    padding-left: 0;
    background: none;
}
.gear {
    width: 11px;
    height: 11px;
    margin: 0 8px 0 2px;
    flex: none;
}
.picked .dots { width: 9px; }
.pick {
    height: 16px;
    display: flex;
    align-items: center;
    padding: 0 4px 0 2px;
    background: #316ac5;
    color: #fff;
}

.props {
    flex: 1;
    min-width: 0;
    display: flex;
    flex-direction: column;
    margin-left: 8px;
    padding-top: 2px;
}
.tabs {
    height: 19px;
    flex: none;
    border-bottom: 1px solid #ccc;
}
.tab {
    display: inline-block;
    width: 58px;
    height: 20px;
    line-height: 19px;
    text-align: center;
    background: #fff;
    border: 1px solid #ddd;
    border-bottom: none;
    box-sizing: border-box;
}
.props-body {
    flex: 1;
    background: #fff;
    padding-top: 6px;
    border-bottom: 2px solid #999;
    margin-right: 4px;
}
.prop-table {
    width: 502px;
    table-layout: fixed;
    border-collapse: collapse;
    font-family: "Liberation Serif", "Noto Sans CJK SC", serif;
}
.c-no { width: 22px; }
.c-name { width: 191px; }
.c-val { width: 260px; }
.c-add { width: 29px; }
.prop-table th, .prop-table td {
    height: 18px;
    padding: 0;
    border: 1px solid #c0c0c0;
    white-space: nowrap;
    overflow: hidden;
    font-weight: 400;
}
.prop-table th {
    height: 21px;
    background: linear-gradient(#fcfcfc, #ececec);
    font-family: "Liberation Sans", "Noto Sans CJK SC", sans-serif;
}
.prop-table .th-val {
    background: linear-gradient(#fbdfa8, #efbe60);
    color: #6a0a6a;
}
.no { text-align: center; background: #f4f4f4; }
.name { padding-left: 20px !important; }
.val { padding-left: 3px !important; }
.link { color: #0000e0; }
.rebar { text-decoration: underline; margin: 0 1px; }
.chk i {
    display: block;
    width: 12px;
    height: 12px;
    margin: 0 auto;
    border: 1px solid #444;
}
.sel .no { background: #fbd48c; color: #a03010; }
.sel .name { background: #0078d7; color: #fff; }
.sel .val { background: #d9e8f7; }
.grp .name { color: #777; padding-left: 3px !important; }
.plus {
    display: inline-block;
    width: 11px;
    height: 11px;
    margin-right: 6px;
    vertical-align: -1px;
    border: 1px solid #bbb;
    background:
        linear-gradient(#222, #222) center / 7px 1px no-repeat,
        linear-gradient(#222, #222) center / 1px 7px no-repeat;
}

/* 状态栏 */
.statusbar {
    height: 21px;
    flex: none;
    display: flex;
    gap: 2px;
    padding-top: 1px;
    box-sizing: border-box;
    background: #f0f0f0;
    font-family: "Liberation Serif", "Noto Sans CJK SC", serif;
}
.statusbar span {
    box-sizing: border-box;
    height: 19px;
    line-height: 19px;
    padding-left: 2px;
    border: 1px solid #ddd;
    white-space: nowrap;
    overflow: hidden;
}
.st-a { width: 148px; }
.st-b { width: 79px; }
.st-c { width: 97px; }
.st-d { width: 48px; }
.st-e { width: 915px; }
.st-f { flex: 1; }

/* 任务栏 */
.taskbar {
    height: 40px;
    flex: none;
    display: flex;
    align-items: center;
    background: #0a1116;
    color: #ddd;
}
.start {
    width: 47px;
    height: 40px;
    flex: none;
    display: flex;
    align-items: center;
    justify-content: center;
    background: #000;
}
.start svg { width: 16px; height: 16px; }
.task-search {
    width: 345px;
    height: 40px;
    flex: none;
    display: flex;
    align-items: center;
    background: #333;
    color: #999;
    font-size: 14px;
    padding: 0 11px;
    box-sizing: border-box;
}
.cortana {
    width: 12px;
    height: 12px;
    margin-right: 6px;
    border: 3px solid #e6e6e6;
    border-radius: 50%;
    flex: none;
}
.task-search svg {
    width: 18px;
    height: 18px;
    margin-left: auto;
}
.task-apps {
    display: flex;
    align-items: center;
    width: 544px;
    height: 40px;
    flex: none;
    padding-left: 12px;
    box-sizing: border-box;
    gap: 18px;
}
.task-apps svg { width: 23px; height: 23px; display: block; flex: none; }
.apps-pinned {
    display: flex;
    align-items: center;
    gap: 27px;
}
.apps-running {
    display: flex;
    align-items: center;
    gap: 8.5px;
}
.app {
    width: 34px;
    height: 40px;
    display: flex;
    align-items: center;
    justify-content: center;
    box-sizing: border-box;
}
.app-on { box-shadow: inset 0 -2px 0 #76b9ed; }
.app-cur {
    width: 40px;
    margin-left: -3.500px;
    background: #3a4145;
    box-shadow: inset 0 -2px 0 #76b9ed;
}
.task-link { width: 26px; flex: none; text-align: center; }
.cpu {
    width: 60px;
    flex: none;
    text-align: center;
    margin-left: 24px;
    line-height: 19px;
}
.tray {
    display: flex;
    align-items: center;
    gap: 8px;
    margin-left: 11px;
}
.tray svg { width: 16px; height: 16px; flex: none; }
.tray .tray-wifi { margin-left: 2px; margin-right: -2px; }
.tray .tray-kb { width: 24px; }
.tray-a {
    font-family: "Liberation Serif", serif;
    font-size: 17px;
    color: #fff;
    margin: 0 4px 0 3px;
}
.clock {
    width: 70px;
    flex: none;
    margin-left: 10px;
    text-align: center;
    line-height: 19px;
}
.notice {
    display: flex;
    align-items: center;
    position: relative;
    margin-left: 15px;
}
.notice svg { width: 16px; height: 16px; }
.notice b {
    position: absolute;
    left: 4px;
    top: 4px;
    width: 20px;
    height: 20px;
    line-height: 18px;
    text-align: center;
    border-radius: 50%;
    background: #333;
    border: 1px solid #777;
    box-sizing: border-box;
    font-size: 12px;
    color: #fff;
}

/* 浮层 */
.badge {
    position: absolute;
    left: 707px;
    top: -24px;
    width: 44px;
    height: 44px;
    padding-top: 23px;
    box-sizing: border-box;
    border-radius: 50%;
    background: #4fb548;
    box-shadow: 0 1px 3px 2px #aaa;
    color: #fff;
    font-weight: 700;
    font-size: 11px;
    text-align: center;
}
.ime {
    position: absolute;
    left: 1000px;
    top: 3px;
    display: flex;
    align-items: center;
}
.ime-logo {
    position: relative;
    z-index: 1;
    width: 24px;
    height: 22px;
    line-height: 22px;
    text-align: center;
    background: #e8481c;
    border-radius: 3px;
    color: #fff;
    font-size: 22px;
    font-weight: 700;
    transform: rotate(-10deg);
}
.ime-bar {
    width: 184px;
    height: 24px;
    margin-left: -4px;
    padding-left: 13px;
    box-sizing: border-box;
    display: flex;
    align-items: center;
    gap: 7px;
    background: #fff;
    border: 1px solid #c6d6e6;
}
.ime-bar svg { width: 15px; height: 16px; }
.ime-a { color: #2d71b8; font-size: 18px; width: 13px; }

.dialog {
    position: absolute;
    left: 700px;
    top: 299px;
    width: 490px;
    height: 290px;
    box-sizing: border-box;
    display: flex;
    flex-direction: column;
    background: #f0f0f0;
    border: 1px solid #3d9ae0;
    box-shadow: 2px 3px 7px rgba(0, 0, 0, .4);
}
.dlg-title {
    height: 27px;
    flex: none;
    display: flex;
    align-items: center;
    justify-content: space-between;
    padding: 0 10px 0 3px;
    background: #fff;
}
.dlg-title svg { width: 11px; height: 11px; }
.dlg-body {
    flex: 1;
    display: flex;
    flex-direction: column;
    padding: 3px 8px 0 5px;
}
.dlg-input {
    height: 27px;
    line-height: 25px;
    box-sizing: border-box;
    text-align: center;
    background: #fff;
    border: 1px solid #888;
    font-family: "Liberation Serif", serif;
    font-size: 19px;
    font-weight: 700;
    margin-right: 1px;
}
.dlg-columns {
    display: flex;
    gap: 6px;
    margin-top: 12px;
}
.dlg-col { width: 252px; flex: none; }
.dlg-col-r { width: 218px; }
.dlg-col-r .dlg-label { padding-left: 9px; }
.dlg-label {
    height: 19px;
    line-height: 16px;
}
.dlg-list, .dlg-desc {
    height: 159px;
    box-sizing: border-box;
    background: #f0f0f0;
    border: 1px solid #aaa;
}
.dlg-list {
    display: flex;
    flex-direction: column;
    padding: 1px;
    font-family: "Liberation Serif", "Noto Sans CJK SC", serif;
}
.dlg-items { flex: 1; overflow: hidden; }
.dlg-item {
    height: 17px;
    line-height: 17px;
    padding-left: 3px;
    white-space: nowrap;
    letter-spacing: -.15px;
}
/* 原图 @2 挤在一起 */
.at { letter-spacing: -3.500px; }
.dlg-item.on { background: #c9dcec; }
.dlg-hscroll {
    height: 16px;
    display: flex;
    align-items: center;
    padding: 0 7px;
    border-top: 1px solid #e8e8e8;
}
.dlg-hscroll .thumb {
    width: 17px;
    height: 15px;
    margin-left: 5px;
    background: #cdcdcd;
}
.dlg-hscroll .arrow.right { margin-left: auto; }
.dlg-desc {
    padding: 3px 2px;
    line-height: 17px;
    font-size: 12px;
}
.dlg-actions {
    display: flex;
    justify-content: flex-end;
    gap: 34px;
    margin-top: 12px;
    padding-right: 14px;
}
.dlg-btn {
    width: 58px;
    height: 20px;
    line-height: 18px;
    text-align: center;
    box-sizing: border-box;
    background: #e1e1e1;
    border: 1px solid #adadad;
}
.dlg-btn.primary { border: 2px solid #0078d7; line-height: 16px; }

.marks {
    position: absolute;
    left: 0;
    top: 0;
    width: 1366px;
    height: 768px;
    pointer-events: none;
}
```
